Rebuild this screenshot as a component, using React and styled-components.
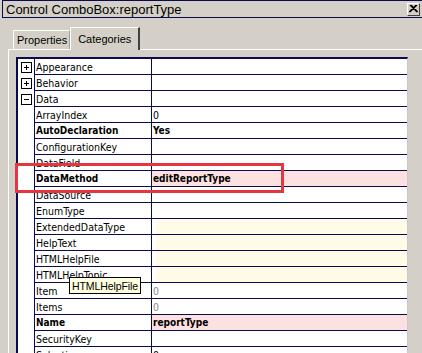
import React from 'react';
import styled, { createGlobalStyle } from 'styled-components';

const GlobalStyle = createGlobalStyle`
  body {
    margin: 0;
    background: #d4d0c8;
    overflow: hidden;
  }
`;

const Window = styled.div`
  position: relative;
  width: 422px;
  height: 353px;
  overflow: hidden;
  background: #d4d0c8;
  font-family: "Liberation Sans", Arial, sans-serif;
  color: #000;
`;

const TitleBar = styled.div`
  display: flex;
  align-items: center;
  justify-content: space-between;
  height: 16px;
  margin-left: 2px;
  padding: 0 2px 0 3px;
  border: 1px solid #0a0a50;
  border-right: none;
  font-size: 13px;
`;

const CloseButton = styled.div`
  display: flex;
  align-items: center;
  justify-content: center;
  width: 11px;
  height: 11px;
  background: #d4d0c8;
  border: 1px solid;
  border-color: #fff #404040 #404040 #fff;
`;

const TabStrip = styled.div`
  display: flex;
  align-items: flex-end;
  height: 22px;
  margin-top: 9px;
  padding-left: 13px;
`;

const Tab = styled.div`
  display: flex;
  align-items: center;
  height: ${p => (p.active ? '22px' : '18px')};
  padding: 0 ${p => (p.active ? '7px' : '2px')} 0 ${p => (p.active ? '7px' : '3px')};
  margin-bottom: ${p => (p.active ? '-1px' : '0')};
  background: #d4d0c8;
  border-top: 1px solid #fff;
  border-left: 1px solid #fff;
  border-right: ${p => (p.active ? '2px solid #404040' : '1px solid #a0a0a0')};
  font-size: 11px;
  position: relative;
  z-index: ${p => (p.active ? 1 : 0)};
`;

const Panel = styled.div`
  margin-left: 8px;
  width: 407px;
  height: 320px;
  border-top: 1px solid #fff;
  border-left: 1px solid #fff;
  border-right: 2px solid #808080;
  padding: 7px 0 0 7px;
`;

const Grid = styled.div`
  width: 389px;
  background: #fff;
  border-top: 2px solid #0a0a50;
  border-left: 2px solid #0a0a50;
  border-right: 1px solid #c8c8d0;
  font-family: "DejaVu Sans Condensed", "Liberation Sans", sans-serif;
`;

const Row = styled.div`
  display: grid;
  grid-template-columns: 17px 117px 1fr;
  height: 16px;
  font-size: ${p => (p.bold ? '10px' : '10.5px')};
  font-weight: ${p => (p.bold ? 700 : 400)};
`;

const IconCell = styled.div`
  display: flex;
  align-items: center;
  justify-content: center;
  border-right: 1px solid #0a0a50;
`;

const NameCell = styled.div`
  display: flex;
  align-items: center;
  padding-left: 1px;
  border-right: 1px solid #0a0a50;
  border-bottom: 1px solid #0a0a50;
  white-space: nowrap;
  overflow: hidden;
`;

const ValueCell = styled.div`
  display: flex;
  align-items: center;
  padding-left: 1px;
  border-bottom: 1px solid #0a0a50;
  box-shadow: ${p => (p.tone === 'yellow' ? 'inset 4px 0 0 #fff' : 'none')};
  background-color: ${p =>
    p.tone === 'pink' ? '#fde1e1' : p.tone === 'yellow' ? '#fffbe6' : '#fff'};
  color: ${p => (p.muted ? '#8a8a8a' : '#000')};
  white-space: nowrap;
`;

const ExpandBox = styled.div`
  display: flex;
  align-items: center;
  justify-content: center;
  width: 9px;
  height: 9px;
  border: 1px solid #000;
  background: #fff;
`;

const Highlight = styled.div`
  position: absolute;
  left: 15px;
  top: 163px;
  width: 263px;
  height: 24px;
  border: 3px solid #e5353f;
  pointer-events: none;
`;

const Tooltip = styled.div`
  position: absolute;
  left: 69px;
  top: 277px;
  height: 15px;
  padding: 0 2px;
  display: flex;
  align-items: center;
  background: #ffffe1;
  border: 1px solid #000;
  font-size: 10.5px;
  letter-spacing: -0.1px;
  white-space: nowrap;
`;

const rows = [
  { name: 'Appearance', toggle: 'plus' },
  { name: 'Behavior', toggle: 'plus' },
  { name: 'Data', toggle: 'minus' },
  { name: 'ArrayIndex', value: '0' },
  { name: 'AutoDeclaration', value: 'Yes', bold: true },
  { name: 'ConfigurationKey' },
  { name: 'DataField' },
  { name: 'DataMethod', value: 'editReportType', bold: true, tone: 'pink' },
  { name: 'DataSource' },
  { name: 'EnumType' },
  { name: 'ExtendedDataType', tone: 'yellow' },
  { name: 'HelpText', tone: 'yellow' },
  { name: 'HTMLHelpFile', tone: 'yellow' },
  { name: 'HTMLHelpTopic', tone: 'yellow' },
  { name: 'Item', value: '0', muted: true },
  { name: 'Items', value: '0', muted: true },
  { name: 'Name', value: 'reportType', bold: true, tone: 'pink' },
  { name: 'SecurityKey' },
  { name: 'Selection', value: '0' },
];

function Toggle({ kind }) {
  return (
    <ExpandBox>
      <svg width="7" height="7" viewBox="0 0 7 7">
        <rect x="1" y="3" width="5" height="1" fill="#000" />
        {kind === 'plus' && <rect x="3" y="1" width="1" height="5" fill="#000" />}
      </svg>
    </ExpandBox>
  );
}

export default function App() {
  return (
    <Window>
      <GlobalStyle />
      <TitleBar>
        <span>Control ComboBox:reportType</span>
        <CloseButton>
          <svg width="9" height="8" viewBox="0 0 9 8">
            <path d="M1 0 L8 7 M8 0 L1 7 M2 0 L9 7 M7 0 L0 7" stroke="#000" strokeWidth="1.1" />
          </svg>
        </CloseButton>
      </TitleBar>
      <TabStrip>
        <Tab>Properties</Tab>
        <Tab active>Categories</Tab>
      </TabStrip>
      <Panel>
        <Grid>
          {rows.map(r => (
            <Row key={r.name} bold={r.bold}>
              <IconCell>{r.toggle && <Toggle kind={r.toggle} />}</IconCell>
              <NameCell>{r.name}</NameCell>
              <ValueCell tone={r.tone} muted={r.muted}>{r.value}</ValueCell>
            </Row>
          ))}
        </Grid>
      </Panel>
      <Highlight />
      <Tooltip>HTMLHelpFile</Tooltip>
    </Window>
  );
}
